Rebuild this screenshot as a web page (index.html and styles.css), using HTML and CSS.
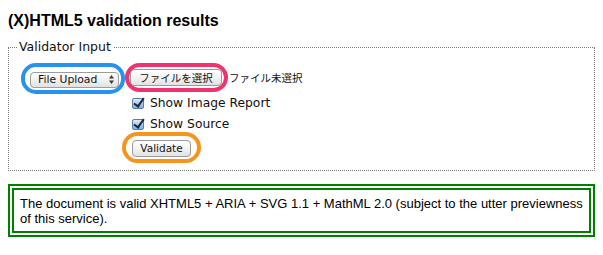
FILE: index.html
```html
<!DOCTYPE html>
<html lang="en">
<head>
    <meta charset="UTF-8">
    <title>(X)HTML5 validation results</title>
    <link rel="stylesheet" href="styles.css">
</head>
<body>
    <h2 class="title">(X)HTML5 validation results</h2>

    <form class="validator">
        <fieldset class="input-set">
            <legend>Validator Input</legend>

            <div class="row">
                <div class="col-first">
                    <span class="mark mark-blue">
                        <select class="doc-select">
                            <option>File Upload</option>
                        </select>
                        <svg class="select-arrows" width="5" height="9" viewBox="0 0 5 9">
                            <path d="M2.5 0 L5 3.5 H0 Z M2.5 9 L5 5.5 H0 Z" fill="#3a3a3a"/>
                        </svg>
                    </span>
                </div>
                <span class="mark mark-pink">
                    <button type="button" class="btn btn-file">ファイルを選択</button>
                </span>
                <span class="file-note">ファイル未選択</span>
            </div>

            <div class="row indent row-check1">
                <label class="check"><input type="checkbox" checked> Show Image Report</label>
            </div>

            <div class="row indent row-check2">
                <label class="check"><input type="checkbox" checked> Show Source</label>
            </div>

            <div class="row indent row-submit">
                <span class="mark mark-orange">
                    <button type="button" class="btn btn-validate">Validate</button>
                </span>
            </div>
        </fieldset>
    </form>

    <div class="result">
        The document is valid XHTML5 + ARIA + SVG 1.1 + MathML 2.0 (subject to the utter previewness of this service).
    </div>
</body>
</html>
```

FILE: styles.css
```css
body {
    margin: 8px;
    font-family: "Liberation Sans", Arial, sans-serif;
    color: #000;
    background: #fff;
}

.title {
    font-size: 16px;
    line-height: 20px;
    font-weight: bold;
    margin: 3px 0 0;
}

.validator {
    margin: 0;
}

.input-set {
    margin: 8px 0 0;
    padding: 14px 8px 13px;
    border: 1px dotted #7a7a7a;
    min-width: 0;
}

.input-set legend {
    padding: 0 2px;
    font-family: "DejaVu Sans", sans-serif;
    font-size: 12.5px;
    line-height: 16px;
    color: #111;
}

.row {
    display: flex;
    align-items: center;
    height: 18px;
    margin-left: 13px;
}

.row.indent {
    padding-left: 100px;
}

.row:first-of-type {
    align-items: flex-start;
}

.row-check1 {
    margin-top: 7px;
}

.row-check2 {
    margin-top: 3px;
}

.row-submit {
    margin-top: 6px;
}

.col-first {
    width: 100px;
    flex: none;
}

/* the coloured rings drawn round the controls */
.mark {
    position: relative;
    display: inline-flex;
}

.mark::before {
    content: "";
    position: absolute;
    border: 4px solid;
    border-radius: 15px;
    pointer-events: none;
}

.mark-blue {
    margin-top: 2px;
}

.mark-blue::before {
    left: -9px;
    right: -6px;
    top: -9px;
    bottom: -6px;
    border-color: #2892ef;
}

.mark-pink::before {
    left: -5px;
    right: -6px;
    top: -6px;
    bottom: -6px;
    border-color: #ef3370;
}

.mark-orange {
    margin-left: 2px;
}

.mark-orange::before {
    left: -10px;
    right: -10px;
    top: -8px;
    bottom: -6px;
    border-color: #f7941e;
    border-radius: 16px;
}

.doc-select {
    appearance: none;
    -webkit-appearance: none;
    width: 89px;
    height: 16px;
    margin: 0;
    padding: 0 0 0 7px;
    border: 1px solid #9c9c9c;
    border-radius: 4px;
    background: linear-gradient(#ffffff, #f1f1f1 50%, #e2e2e2);
    font-family: "DejaVu Sans", sans-serif;
    font-size: 10.8px;
    line-height: 14px;
    color: #111;
}

.select-arrows {
    position: absolute;
    left: 79px;
    top: 3px;
    pointer-events: none;
}

.btn {
    margin: 0;
    height: 17px;
    border: 1px solid #9a9a9a;
    border-radius: 4px;
    background: linear-gradient(#ffffff, #f3f3f3 50%, #e3e3e3);
    color: #111;
    padding: 0;
    cursor: pointer;
}

.btn-file {
    width: 92px;
    font-family: "Noto Sans CJK JP", sans-serif;
    font-size: 10.5px;
    line-height: 15px;
}

.btn-validate {
    width: 59px;
    font-family: "DejaVu Sans", sans-serif;
    font-size: 10.5px;
    line-height: 15px;
}

.file-note {
    margin-left: 7px;
    font-family: "Noto Sans CJK JP", sans-serif;
    font-size: 10.5px;
    line-height: 17px;
    color: #111;
}

.check {
    display: flex;
    align-items: center;
    font-family: "DejaVu Sans", sans-serif;
    font-size: 12.3px;
    color: #111;
}

.check input {
    appearance: none;
    -webkit-appearance: none;
    position: relative;
    width: 12px;
    height: 11px;
    margin: 0 6px 0 2px;
    border: 1px solid #5b7da6;
    border-radius: 2px;
    background: linear-gradient(#dcecfc, #a9cbf1 50%, #7fb0ea);
}

.check input:checked::after {
    content: "";
    position: absolute;
    left: 3px;
    top: -3px;
    width: 4px;
    height: 9px;
    border: solid #1d2733;
    border-width: 0 2px 2px 0;
    transform: rotate(35deg);
}

.result {
    margin-top: 13px;
    border: 6px double #008000;
    padding: 6px 6px 5px;
    font-size: 13px;
    line-height: 15px;
}
```
